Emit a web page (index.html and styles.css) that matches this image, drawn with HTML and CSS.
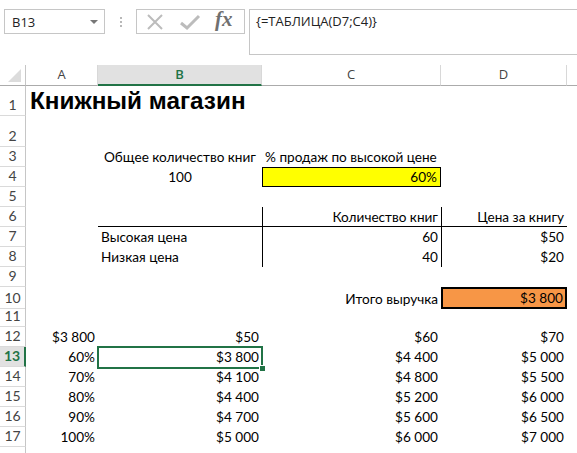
FILE: index.html
```html
<!DOCTYPE html>
<html lang="ru">
<head>
    <meta charset="UTF-8">
    <title>Книжный магазин</title>
    <link rel="stylesheet" href="styles.css">
</head>
<body>
    <div class="formula-bar">
        <div class="name-box">
            <span>B13</span>
            <span class="name-arrow"></span>
        </div>
        <div class="grip">
            <i></i><i></i><i></i>
        </div>
        <div class="fx-buttons">
            <svg width="20" height="20" viewBox="0 0 20 20">
                <path d="M3 3L17 17M17 3L3 17" stroke="#bcbcbc" stroke-width="2" fill="none"/>
            </svg>
            <svg width="22" height="20" viewBox="0 0 22 20">
                <path d="M2 11L8 16L20 4" stroke="#bcbcbc" stroke-width="3" fill="none"/>
            </svg>
            <span class="fx">fx</span>
        </div>
        <div class="formula-input">{=ТАБЛИЦА(D7;C4)}</div>
    </div>

    <div class="sheet">
        <div class="row col-heads">
            <div class="corner"><span class="corner-tri"></span></div>
            <div class="col-head">A</div>
            <div class="col-head active">B</div>
            <div class="col-head">C</div>
            <div class="col-head">D</div>
            <div class="col-head last"></div>
        </div>

        <div class="row r-title">
            <div class="row-head">1</div>
            <div class="cell title">Книжный магазин</div>
            <div class="cell"></div><div class="cell"></div><div class="cell"></div><div class="cell"></div>
        </div>
        <div class="row r-tall">
            <div class="row-head">2</div>
            <div class="cell"></div><div class="cell"></div><div class="cell"></div><div class="cell"></div><div class="cell"></div>
        </div>
        <div class="row">
            <div class="row-head">3</div>
            <div class="cell"></div>
            <div class="cell center">Общее количество книг</div>
            <div class="cell">% продаж по высокой цене</div>
            <div class="cell"></div><div class="cell"></div>
        </div>
        <div class="row">
            <div class="row-head">4</div>
            <div class="cell"></div>
            <div class="cell center">100</div>
            <div class="cell num input-yellow">60%</div>
            <div class="cell"></div><div class="cell"></div>
        </div>
        <div class="row">
            <div class="row-head">5</div>
            <div class="cell"></div><div class="cell"></div><div class="cell"></div><div class="cell"></div><div class="cell"></div>
        </div>
        <div class="row">
            <div class="row-head">6</div>
            <div class="cell"></div>
            <div class="cell line-b"></div>
            <div class="cell num line-b line-l">Количество книг</div>
            <div class="cell num line-b line-l">Цена за книгу</div>
            <div class="cell"></div>
        </div>
        <div class="row">
            <div class="row-head">7</div>
            <div class="cell"></div>
            <div class="cell">Высокая цена</div>
            <div class="cell num line-l">60</div>
            <div class="cell num line-l">$50</div>
            <div class="cell"></div>
        </div>
        <div class="row">
            <div class="row-head">8</div>
            <div class="cell"></div>
            <div class="cell">Низкая цена</div>
            <div class="cell num line-l">40</div>
            <div class="cell num line-l">$20</div>
            <div class="cell"></div>
        </div>
        <div class="row">
            <div class="row-head">9</div>
            <div class="cell"></div><div class="cell"></div><div class="cell"></div><div class="cell"></div><div class="cell"></div>
        </div>
        <div class="row">
            <div class="row-head">10</div>
            <div class="cell"></div>
            <div class="cell"></div>
            <div class="cell num">Итого выручка</div>
            <div class="cell num total">$3 800</div>
            <div class="cell"></div>
        </div>
        <div class="row">
            <div class="row-head">11</div>
            <div class="cell"></div><div class="cell"></div><div class="cell"></div><div class="cell"></div><div class="cell"></div>
        </div>
        <div class="row">
            <div class="row-head">12</div>
            <div class="cell num">$3 800</div>
            <div class="cell num">$50</div>
            <div class="cell num">$60</div>
            <div class="cell num">$70</div>
            <div class="cell"></div>
        </div>
        <div class="row">
            <div class="row-head active">13</div>
            <div class="cell num">60%</div>
            <div class="cell num selected">$3 800<span class="fill-handle"></span></div>
            <div class="cell num">$4 400</div>
            <div class="cell num">$5 000</div>
            <div class="cell"></div>
        </div>
        <div class="row">
            <div class="row-head">14</div>
            <div class="cell num">70%</div>
            <div class="cell num">$4 100</div>
            <div class="cell num">$4 800</div>
            <div class="cell num">$5 500</div>
            <div class="cell"></div>
        </div>
        <div class="row">
            <div class="row-head">15</div>
            <div class="cell num">80%</div>
            <div class="cell num">$4 400</div>
            <div class="cell num">$5 200</div>
            <div class="cell num">$6 000</div>
            <div class="cell"></div>
        </div>
        <div class="row">
            <div class="row-head">16</div>
            <div class="cell num">90%</div>
            <div class="cell num">$4 700</div>
            <div class="cell num">$5 600</div>
            <div class="cell num">$6 500</div>
            <div class="cell"></div>
        </div>
        <div class="row">
            <div class="row-head">17</div>
            <div class="cell num">100%</div>
            <div class="cell num">$5 000</div>
            <div class="cell num">$6 000</div>
            <div class="cell num">$7 000</div>
            <div class="cell"></div>
        </div>
        <div class="row">
            <div class="row-head"></div>
            <div class="cell"></div><div class="cell"></div><div class="cell"></div><div class="cell"></div><div class="cell"></div>
        </div>
    </div>
</body>
</html>
```

FILE: styles.css
```css
body {
    margin: 0;
    width: 577px;
    height: 453px;
    overflow: hidden;
    background: #fff;
    font-family: Lato, "Open Sans", sans-serif;
    color: #000;
}

/* Formula bar */
.formula-bar {
    display: flex;
    align-items: flex-start;
    height: 65px;
    padding-top: 9px;
    box-sizing: border-box;
}

.name-box {
    margin-left: 4px;
    width: 101px;
    height: 25px;
    border: 1px solid #c6c6c6;
    box-sizing: border-box;
    display: flex;
    align-items: center;
    justify-content: space-between;
    padding: 0 6px 0 7px;
    font-family: "Open Sans", sans-serif;
    font-size: 13px;
    color: #222;
}

.name-arrow {
    width: 0;
    height: 0;
    border-left: 4px solid transparent;
    border-right: 4px solid transparent;
    border-top: 4px solid #777;
}

.grip {
    width: 31px;
    height: 25px;
    display: flex;
    flex-direction: column;
    align-items: center;
    justify-content: center;
    gap: 2px;
}

.grip i {
    width: 2px;
    height: 2px;
    background: #b8b8b8;
}

.fx-buttons {
    width: 109px;
    height: 25px;
    border: 1px solid #c6c6c6;
    box-sizing: border-box;
    display: flex;
    align-items: center;
    padding-left: 8px;
    gap: 14px;
}

.fx {
    font-family: "Liberation Serif", serif;
    font-style: italic;
    font-weight: bold;
    font-size: 21px;
    color: #707070;
    margin-top: -4px;
}

.formula-input {
    flex: 1;
    margin-left: 4px;
    height: 46px;
    border: 1px solid #c6c6c6;
    border-right: none;
    box-sizing: border-box;
    padding: 2px 6px;
    font-family: "Open Sans", sans-serif;
    font-size: 13px;
    color: #222;
}

/* Sheet grid */
.row {
    display: grid;
    grid-template-columns: 26px 72px 164px 179px 126px 1fr;
    height: 20px;
}

.r-title,
.r-tall {
    height: 31px;
}

.col-heads {
    height: 20px;
}

.corner {
    position: relative;
    border-right: 1px solid #c6c6c6;
    border-bottom: 1px solid #ababab;
    box-sizing: border-box;
}

.corner-tri {
    position: absolute;
    right: 4px;
    bottom: 3px;
    width: 0;
    height: 0;
    border-left: 13px solid transparent;
    border-bottom: 13px solid #dcdcdc;
}

.col-head {
    border-right: 1px solid #d8d8d8;
    border-bottom: 1px solid #ababab;
    box-sizing: border-box;
    text-align: center;
    font-family: "Open Sans", sans-serif;
    font-size: 13px;
    line-height: 19px;
    color: #444;
}

.col-head.active {
    background: #e1e1e1;
    color: #217346;
    font-weight: 600;
    border-bottom: 2px solid #217346;
}

.col-head.last {
    border-right: none;
}

.row-head {
    border-right: 1px solid #c6c6c6;
    border-bottom: 1px solid #dadada;
    box-sizing: border-box;
    display: flex;
    align-items: flex-end;
    justify-content: center;
    padding-bottom: 1px;
    font-size: 14px;
    line-height: 18px;
    color: #444;
}

.row-head.active {
    background: #e1e1e1;
    color: #217346;
    font-weight: bold;
    border-right: 2px solid #217346;
}

.cell {
    display: flex;
    align-items: flex-end;
    padding: 0 3px 1px 3px;
    box-sizing: border-box;
    font-size: 13.6px;
    line-height: 18px;
    white-space: nowrap;
}

.cell.num {
    justify-content: flex-end;
}

.cell.center {
    justify-content: center;
}

.title {
    font-family: "Liberation Sans", Arial, sans-serif;
    font-weight: bold;
    font-size: 24.3px;
    line-height: 27px;
    padding-left: 4px;
    padding-bottom: 2px;
    overflow: visible;
}

.input-yellow {
    background: #ffff00;
    border: 1px solid #000;
    padding-bottom: 0;
}

.total {
    background: #f79646;
    border: 2px solid #000;
    padding-bottom: 0;
    padding-right: 2px;
}

.line-b {
    border-bottom: 1px solid #000;
    padding-bottom: 0;
}

.line-l {
    border-left: 1px solid #000;
}

.selected {
    position: relative;
}

.selected::after {
    content: "";
    position: absolute;
    left: -1px;
    top: -1px;
    right: -1px;
    bottom: -2px;
    border: 2px solid #217346;
}

.fill-handle {
    position: absolute;
    right: -4px;
    bottom: -5px;
    width: 5px;
    height: 5px;
    background: #217346;
    border: 1px solid #fff;
    z-index: 1;
}
```
